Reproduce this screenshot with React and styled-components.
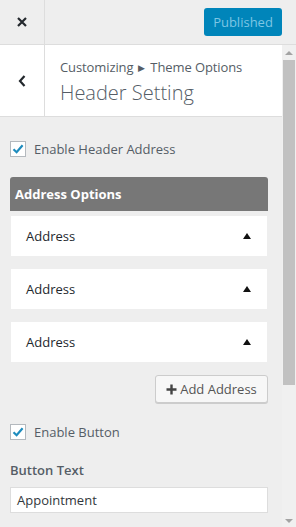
import React from "react";
import styled, { createGlobalStyle } from "styled-components";

const Global = createGlobalStyle`
  html, body { margin: 0; padding: 0; background: #eee; }
  body { font-family: "Open Sans", "Noto Sans", sans-serif; color: #555d66; }
  * { box-sizing: border-box; }
`;

const Page = styled.div`
  width: 296px;
  height: 527px;
  overflow: hidden;
  display: flex;
  flex-direction: column;
  background: #eee;
`;

const TopBar = styled.div`
  height: 45px;
  display: flex;
  align-items: center;
  border-bottom: 1px solid #ddd;
  background: #eee;
`;

const IconCell = styled.div`
  width: 45px;
  height: 100%;
  display: flex;
  align-items: center;
  justify-content: center;
  border-right: 1px solid #ddd;
  color: #23282d;
`;

const PublishButton = styled.div`
  margin-left: auto;
  margin-right: 14px;
  width: 78px;
  height: 28px;
  border-radius: 3px;
  background: #0085ba;
  color: #7ec6e4;
  font-size: 13px;
  display: flex;
  align-items: center;
  justify-content: center;
`;

const Body = styled.div`
  flex: 1;
  display: flex;
  min-height: 0;
`;

const Panel = styled.div`
  flex: 1;
  display: flex;
  flex-direction: column;
`;

const SectionHead = styled.div`
  height: 72px;
  display: flex;
  background: #fff;
  border-bottom: 1px solid #ddd;
`;

const HeadText = styled.div`
  padding: 13px 0 0 15px;
`;

const Crumb = styled.div`
  font-size: 13px;
  line-height: 18px;
  color: #555d66;
  letter-spacing: -0.1px;
`;

const Sep = styled.span`
  font-size: 9px;
  margin: 0 5px;
  vertical-align: 1px;
`;

const Title = styled.div`
  font-size: 20px;
  font-weight: 300;
  line-height: 28px;
  color: #555d66;
  margin-top: 2px;
`;

const Content = styled.div`
  padding: 23px 14px 0 10px;
  display: flex;
  flex-direction: column;
`;

const CheckRow = styled.label`
  display: flex;
  align-items: center;
  gap: 8px;
  font-size: 13px;
  color: #555d66;
  margin-bottom: ${(p) => p.$mb || 0}px;
`;

const Box = styled.span`
  width: 16px;
  height: 16px;
  border: 1px solid #b4b9be;
  background: #fff;
  display: flex;
  align-items: center;
  justify-content: center;
`;

const GroupHead = styled.div`
  height: 34px;
  background: #777;
  border-radius: 3px 3px 0 0;
  color: #fff;
  font-weight: 700;
  font-size: 13px;
  display: flex;
  align-items: center;
  padding-left: 5px;
  margin-bottom: 5px;
`;

const Item = styled.div`
  height: 40px;
  margin: 0 1px 13px 1px;
  background: #fff;
  display: flex;
  align-items: center;
  justify-content: space-between;
  padding: 0 16px 0 15px;
  font-size: 13px;
  color: #23282d;
`;

const Caret = styled.span`
  width: 0;
  height: 0;
  border-left: 4px solid transparent;
  border-right: 4px solid transparent;
  border-bottom: 6px solid #111;
`;

const AddRow = styled.div`
  display: flex;
  justify-content: flex-end;
  margin-bottom: 20px;
`;

const AddButton = styled.div`
  width: 113px;
  height: 28px;
  border: 1px solid #ccc;
  border-radius: 3px;
  background: #f7f7f7;
  box-shadow: 0 1px 0 #ccc;
  font-size: 13px;
  color: #555;
  display: flex;
  align-items: center;
  justify-content: center;
  gap: 3px;
`;

const Label = styled.div`
  font-size: 13px;
  font-weight: 600;
  color: #555d66;
  margin: 20px 0 8px;
`;

const Input = styled.div`
  height: 26px;
  background: #fff;
  border: 1px solid #ddd;
  font-size: 13px;
  color: #32373c;
  display: flex;
  align-items: center;
  padding-left: 6px;
`;

const Scroll = styled.div`
  width: 14px;
  display: flex;
  flex-direction: column;
  align-items: center;
  background: #f0f0f0;
`;

const Arrow = styled.span`
  width: 0;
  height: 0;
  border-left: 4px solid transparent;
  border-right: 4px solid transparent;
  ${(p) => (p.$down ? "border-top: 4px solid #a3a3a3;" : "border-bottom: 4px solid #a3a3a3;")}
  margin: ${(p) => (p.$down ? "auto 0 4px" : "6px 0 5px")};
`;

const Thumb = styled.div`
  width: 12px;
  height: 325px;
  background: #c1c1c1;
`;

const Check = () => (
  <Box>
    <svg width="14" height="14" viewBox="0 0 14 14">
      <path d="M2.5 7.2 L5.6 10.2 L11.6 3.2" fill="none" stroke="#1e8cbe" strokeWidth="2.2" />
    </svg>
  </Box>
);

export default function App() {
  return (
    <Page>
      <Global />
      <TopBar>
        <IconCell>
          <svg width="12" height="12" viewBox="0 0 12 12">
            <path d="M2 2 L10 10 M10 2 L2 10" stroke="#23282d" strokeWidth="2.2" />
          </svg>
        </IconCell>
        <PublishButton>Published</PublishButton>
      </TopBar>
      <Body>
        <Panel>
          <SectionHead>
            <IconCell>
              <svg width="10" height="14" viewBox="0 0 10 14">
                <path d="M7.5 2 L3 7 L7.5 12" fill="none" stroke="#23282d" strokeWidth="2.2" />
              </svg>
            </IconCell>
            <HeadText>
              <Crumb>
                Customizing<Sep>▶</Sep>Theme Options
              </Crumb>
              <Title>Header Setting</Title>
            </HeadText>
          </SectionHead>
          <Content>
            <CheckRow $mb={19}>
              <Check />
              Enable Header Address
            </CheckRow>
            <GroupHead>Address Options</GroupHead>
            {[0, 1, 2].map((i) => (
              <Item key={i}>
                Address
                <Caret />
              </Item>
            ))}
            <AddRow>
              <AddButton>
                <svg width="11" height="11" viewBox="0 0 11 11">
                  <path d="M5.5 0.5 V10.5 M0.5 5.5 H10.5" stroke="#444" strokeWidth="2.4" />
                </svg>
                Add Address
              </AddButton>
            </AddRow>
            <CheckRow>
              <Check />
              Enable Button
            </CheckRow>
            <Label>Button Text</Label>
            <Input>Appointment</Input>
          </Content>
        </Panel>
        <Scroll>
          <Arrow />
          <Thumb />
          <Arrow $down />
        </Scroll>
      </Body>
    </Page>
  );
}
